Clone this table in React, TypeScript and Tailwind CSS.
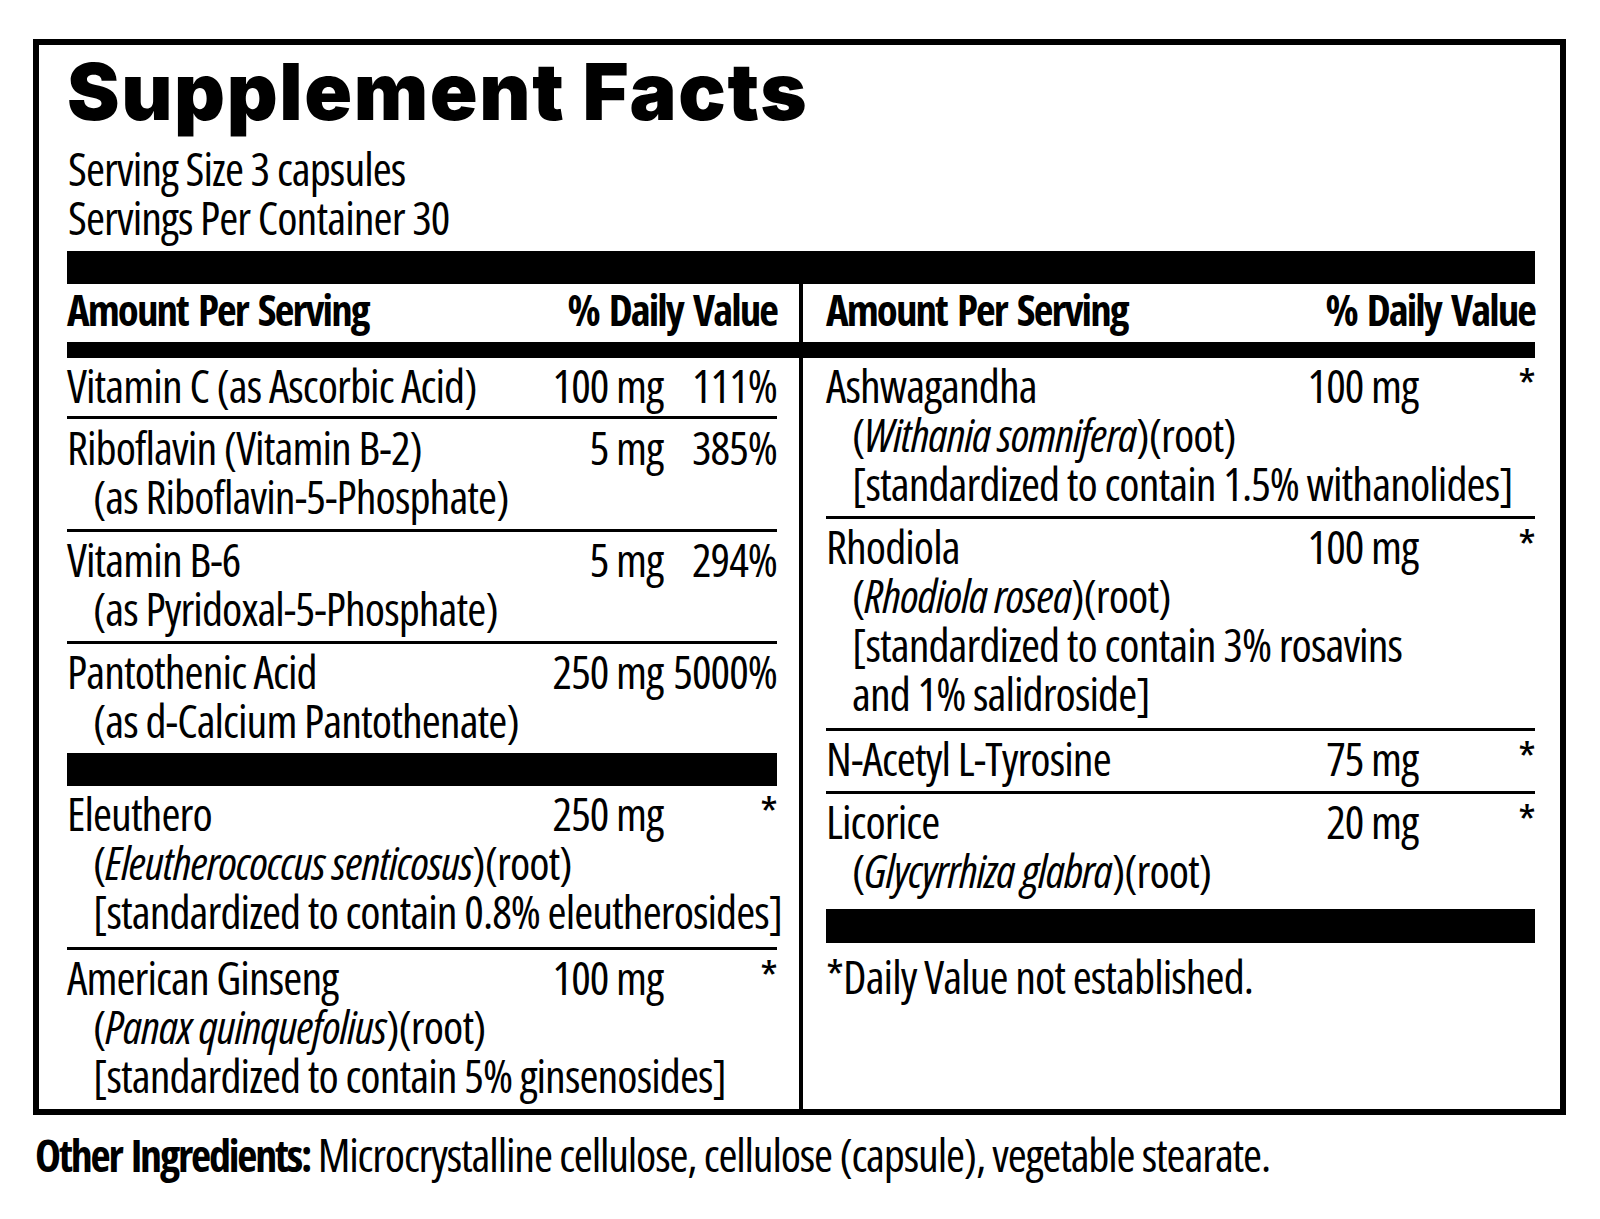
import React from "react";

type Row = {
  name: React.ReactNode;
  amount: string;
  dv: string;
  sub?: React.ReactNode[];
  pad?: string;
};

const leftTop: Row[] = [
  { name: "Vitamin C (as Ascorbic Acid)", amount: "100 mg", dv: "111%", pad: "pt-[3px] pb-[6px]" },
  {
    name: "Riboflavin (Vitamin B-2)",
    amount: "5 mg",
    dv: "385%",
    sub: ["(as Riboflavin-5-Phosphate)"],
    pad: "pt-[4px] pb-[8px]",
  },
  { name: "Vitamin B-6", amount: "5 mg", dv: "294%", sub: ["(as Pyridoxal-5-Phosphate)"] },
  { name: "Pantothenic Acid", amount: "250 mg", dv: "5000%", sub: ["(as d-Calcium Pantothenate)"] },
];

const leftBottom: Row[] = [
  {
    name: "Eleuthero",
    amount: "250 mg",
    dv: "*",
    sub: [
      <>(<i>Eleutherococcus senticosus</i>)(root)</>,
      "[standardized to contain 0.8% eleutherosides]",
    ],
    pad: "pt-[3px] pb-[11px]",
  },
  {
    name: "American Ginseng",
    amount: "100 mg",
    dv: "*",
    sub: [<>(<i>Panax quinquefolius</i>)(root)</>, "[standardized to contain 5% ginsenosides]"],
  },
];

const rightRows: Row[] = [
  {
    name: "Ashwagandha",
    amount: "100 mg",
    dv: "*",
    sub: [<>(<i>Withania somnifera</i>)(root)</>, "[standardized to contain 1.5% withanolides]"],
  },
  {
    name: "Rhodiola",
    amount: "100 mg",
    dv: "*",
    sub: [
      <>(<i>Rhodiola rosea</i>)(root)</>,
      "[standardized to contain 3% rosavins",
      "and 1% salidroside]",
    ],
    pad: "pt-[3px] pb-[10px]",
  },
  { name: "N-Acetyl L-Tyrosine", amount: "75 mg", dv: "*" },
  { name: "Licorice", amount: "20 mg", dv: "*", sub: [<>(<i>Glycyrrhiza glabra</i>)(root)</>] },
];

function RowView({ row, last, right }: { row: Row; last: boolean; right?: boolean }) {
  const pad = row.pad ?? "pt-[3px] pb-[8px]";
  return (
    <div className={last ? pad : pad + " border-b-[3px] border-black"}>
      <div className="flex whitespace-nowrap">
        <div className="flex-1">{row.name}</div>
        <div className="text-right">{row.amount}</div>
        <div className={right ? "w-[117px] text-right" : "w-[114px] text-right"}>{row.dv}</div>
      </div>
      {row.sub?.map((s, i) => (
        <div key={i} className="pl-[26px] whitespace-nowrap">
          {s}
        </div>
      ))}
    </div>
  );
}

export default function App() {
  return (
    <div className="min-h-[1219px] bg-white pl-[33px] pt-[39px] text-black font-['Open_Sans',sans-serif] [font-stretch:75%] text-[46px] leading-[49px] tracking-[-0.02em]">
      <div className="w-[1533px] border-[6px] border-black pl-[28px] pr-[25px]">
        <h1 className="pt-[7px] font-['Inter',sans-serif] [font-stretch:100%] font-black text-[79px] leading-[79px] tracking-[0.02em]">
          Supplement Facts
        </h1>
        <div className="mt-[13px] pl-[1px]">
          <div>Serving Size 3 capsules</div>
          <div>Servings Per Container 30</div>
        </div>
        <div className="mt-[9px] h-[33px] bg-black" />
        <div className="grid grid-cols-[736px_1fr]">
          <div className="flex justify-between border-r-[4px] border-black pr-[22px] pb-[6px] font-bold text-[43px] leading-[52px] tracking-[-0.045em] [word-spacing:0.1em]">
            <span>Amount Per Serving</span>
            <span>% Daily Value</span>
          </div>
          <div className="flex justify-between pl-[23px] pb-[6px] font-bold text-[43px] leading-[52px] tracking-[-0.045em] [word-spacing:0.1em]">
            <span>Amount Per Serving</span>
            <span>% Daily Value</span>
          </div>
          <div className="col-span-2 h-[16px] bg-black" />
          <div className="border-r-[4px] border-black pr-[22px] pb-[1px]">
            {leftTop.map((r, i) => (
              <RowView key={i} row={r} last={i === leftTop.length - 1} />
            ))}
            <div className="h-[33px] bg-black" />
            {leftBottom.map((r, i) => (
              <RowView key={i} row={r} last={i === leftBottom.length - 1} />
            ))}
          </div>
          <div className="pl-[23px]">
            {rightRows.map((r, i) => (
              <RowView key={i} row={r} last={i === rightRows.length - 1} right />
            ))}
            <div className="mt-[6px] h-[34px] bg-black" />
            <div className="pt-[9px] whitespace-nowrap">*Daily Value not established.</div>
          </div>
        </div>
      </div>
      <div className="mt-[15px] pl-[2px] whitespace-nowrap tracking-[-0.025em]">
        <span className="font-bold text-[44px] tracking-[-0.05em] [word-spacing:0.08em]">Other Ingredients:</span>{" "}
        Microcrystalline cellulose, cellulose (capsule), vegetable stearate.
      </div>
    </div>
  );
}
